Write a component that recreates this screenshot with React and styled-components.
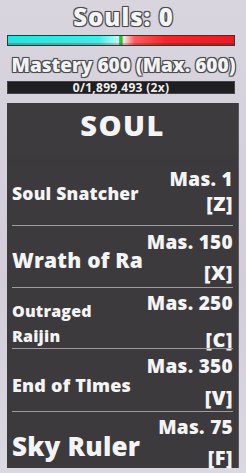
import React from "react";
import styled, { createGlobalStyle } from "styled-components";

// ---------- base ----------
const Global = createGlobalStyle`
  html, body {
    margin: 0;
    padding: 0;
    background: #d4d0db;
    font-family: "Open Sans", "Noto Sans", sans-serif;
  }
`;

const Pagina = styled.div`
  width: 246px;
  height: 473px;
  overflow: hidden;
  box-sizing: border-box;
  padding: 0 6px 0 7px;
  display: flex;
  flex-direction: column;
  background: linear-gradient(180deg, #d9d5df 0%, #d2cdd9 60%, #dcd8e2 100%);
`;

// texto con borde oscuro (estilo roblox)
const contorno = `
  text-shadow:
    -1px -1px 0 #4a4a4e, 1px -1px 0 #4a4a4e,
    -1px 1px 0 #4a4a4e, 1px 1px 0 #4a4a4e,
    0 0 2px #333;
`;

const Titulo = styled.div`
  color: #f4f4f4;
  font-weight: 800;
  font-size: 24px;
  letter-spacing: 1px;
  line-height: 28px;
  text-align: center;
  padding-top: 3px;
  ${contorno}
`;

// ---------- barra de almas ----------
const Barra = styled.div`
  margin-top: 4px;
  width: 226px;
  height: 9px;
  border: 1px solid #2d3a3a;
  background: linear-gradient(
    90deg,
    #1ee6de 0%,
    #3ceee8 40%,
    #b9fbf8 49%,
    #2fbf3a 49.4%,
    #2fbf3a 50.4%,
    #f7eaea 51.2%,
    #ff5a5a 56%,
    #f42428 70%,
    #ec1b22 100%
  );
  box-shadow: inset 0 -2px 0 rgba(120, 0, 0, 0.25);
`;

const Maestria = styled.div`
  margin-top: 8px;
  color: #f2f2f2;
  font-weight: 800;
  font-size: 19px;
  letter-spacing: 0px;
  line-height: 22px;
  text-align: center;
  white-space: nowrap;
  ${contorno}
`;

const BarraXP = styled.div`
  margin-top: 5px;
  width: 226px;
  height: 11px;
  background: #1f1f21;
  border: 1px solid #444;
  color: #f0f0f0;
  font-weight: 700;
  font-size: 12px;
  line-height: 11px;
  text-align: center;
  letter-spacing: 0.3px;
`;

// ---------- panel ----------
const Panel = styled.div`
  margin-top: 9px;
  width: 231px;
  height: 365px;
  background: #3c3a3d;
  border-right: 1px solid #5a5860;
  display: flex;
  flex-direction: column;
`;

const Cabecera = styled.div`
  height: 60px;
  box-sizing: border-box;
  padding-top: 5px;
  color: #f4f4f4;
  font-weight: 800;
  font-size: 29px;
  letter-spacing: 1.5px;
  line-height: 34px;
  text-align: center;
  background: linear-gradient(180deg, #3e3b3e 0%, #3e3b3e 75%, #3a393b 100%);
`;

const Fila = styled.div`
  height: ${(p) => p.alto}px;
  box-sizing: border-box;
  margin: 0 5px 0 5px;
  border-top: ${(p) => (p.primera ? "none" : "1px solid #9d9d9f")};
  padding: ${(p) => p.pt}px 0 ${(p) => p.pb}px 0;
  display: grid;
  grid-template-columns: 1fr auto;
  color: #f4f4f4;
  font-weight: 800;
`;

const Nombre = styled.div`
  align-self: center;
  margin-top: ${(p) => p.baja}px;
  font-size: ${(p) => p.tam}px;
  line-height: ${(p) => p.lh || p.tam}px;
  letter-spacing: 0.2px;
  white-space: pre;
`;

const Derecha = styled.div`
  display: flex;
  flex-direction: column;
  justify-content: space-between;
  align-items: flex-end;
  text-align: right;
`;

const Mas = styled.div`
  font-size: 19px;
  line-height: 18px;
  letter-spacing: 0.3px;
  white-space: nowrap;
`;

const Tecla = styled.div`
  font-size: 20px;
  line-height: 19px;
  letter-spacing: 0.5px;
`;

const habilidades = [
  { nombre: "Soul Snatcher", tam: 17.5, mas: 1, tecla: "Z", alto: 62, pt: 7, pb: 12, baja: 4 },
  { nombre: "Wrath of Ra", tam: 21, mas: 150, tecla: "X", alto: 62, pt: 7, pb: 5, baja: 5 },
  { nombre: "Outraged\nRaijin", tam: 16, lh: 25, mas: 250, tecla: "C", alto: 61, pt: 6, pb: 7, baja: 5 },
  { nombre: "End of Times", tam: 18, mas: 350, tecla: "V", alto: 63, pt: 8, pb: 4, baja: 6 },
  { nombre: "Sky Ruler", tam: 26, mas: 75, tecla: "F", alto: 57, pt: 6, pb: 1, baja: 6 },
];

export default function App() {
  return (
    <>
      <Global />
      <Pagina>
        <Titulo>Souls: 0</Titulo>
        <Barra />
        <Maestria>Mastery 600 (Max. 600)</Maestria>
        <BarraXP>0/1,899,493 (2x)</BarraXP>

        <Panel>
          <Cabecera>SOUL</Cabecera>
          {habilidades.map((h, i) => (
            <Fila key={h.tecla} primera={i === 0} alto={h.alto} pt={h.pt} pb={h.pb}>
              <Nombre tam={h.tam} lh={h.lh} baja={h.baja}>
                {h.nombre}
              </Nombre>
              <Derecha>
                <Mas>Mas. {h.mas}</Mas>
                <Tecla>[{h.tecla}]</Tecla>
              </Derecha>
            </Fila>
          ))}
        </Panel>
      </Pagina>
    </>
  );
}
